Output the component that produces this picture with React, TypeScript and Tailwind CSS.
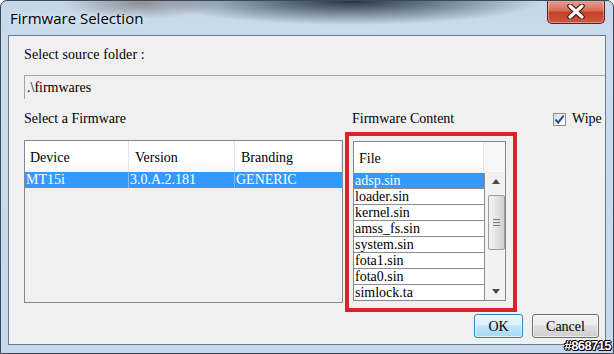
const serif = "font-['Liberation_Serif',serif]";

const files = [
  'adsp.sin',
  'loader.sin',
  'kernel.sin',
  'amss_fs.sin',
  'system.sin',
  'fota1.sin',
  'fota0.sin',
  'simlock.ta',
];

function CloseButton() {
  return (
    <div className="w-[58px] h-[24px] rounded-b-[5px] border border-t-0 border-[#5c2018] bg-[linear-gradient(180deg,#e9a699_0%,#d86b56_45%,#c3402a_55%,#d0573d_100%)] shadow-[inset_0_0_0_1px_rgba(255,255,255,0.35)] flex items-center justify-center">
      <svg width="18" height="15" viewBox="0 0 18 15">
        <path d="M3 2 L15 13 M15 2 L3 13" stroke="#3a1410" strokeWidth="5.5" strokeLinecap="round" />
        <path d="M3 2 L15 13 M15 2 L3 13" stroke="#ffffff" strokeWidth="3.2" strokeLinecap="round" />
      </svg>
    </div>
  );
}

function Checkbox() {
  return (
    <div className="w-[13px] h-[13px] border border-[#8e8f8f] bg-[linear-gradient(135deg,#dcdcdc,#ffffff)] flex items-center justify-center">
      <svg width="11" height="11" viewBox="0 0 11 11">
        <path d="M1.5 5.5 L4.2 8.6 L9.6 1.6" stroke="#2b4e8c" strokeWidth="2" fill="none" />
      </svg>
    </div>
  );
}

function Scrollbar() {
  return (
    <div className="flex-1 bg-[#f2f2f2] flex flex-col items-center">
      <div className="h-[17px] w-full flex items-center justify-center pl-[2px]">
        <svg width="8" height="5" viewBox="0 0 8 5">
          <path d="M0 5 L4 0 L8 5 Z" fill="#4a4a4a" />
        </svg>
      </div>
      <div className="mt-[5px] ml-[2px] w-[17px] h-[55px] rounded-[2px] border border-[#9b9b9b] bg-[linear-gradient(90deg,#f4f4f4,#e4e4e4_50%,#d0d0d0)] flex flex-col items-center justify-center gap-[2px]">
        <div className="w-[7px] h-px bg-[#7a7a7a]" />
        <div className="w-[7px] h-px bg-[#7a7a7a]" />
        <div className="w-[7px] h-px bg-[#7a7a7a]" />
      </div>
      <div className="flex-1" />
      <div className="h-[17px] w-full flex items-center justify-center pl-[2px]">
        <svg width="8" height="5" viewBox="0 0 8 5">
          <path d="M0 0 L8 0 L4 5 Z" fill="#4a4a4a" />
        </svg>
      </div>
    </div>
  );
}

function FirmwareList() {
  return (
    <div className="w-[319px] h-[163px] mt-[13px] border border-[#828790] bg-[#f0f0f0] flex flex-col">
      <div className="h-[31px] bg-[linear-gradient(180deg,#ffffff_60%,#f7f8f9)] flex items-center text-[14px] text-black">
        <div className="w-[104px] h-full pl-[5px] pt-[2px] flex items-center border-r border-[#e3e5e8]">Device</div>
        <div className="w-[106px] h-full pl-[6px] pt-[2px] flex items-center border-r border-[#e3e5e8]">Version</div>
        <div className="flex-1 h-full pl-[6px] pt-[2px] flex items-center border-r border-[#e3e5e8]">Branding</div>
      </div>
      <div className="h-[16px] bg-[#3399ff] text-white text-[14px] leading-[16px] flex">
        <div className="w-[104px] pl-[1px] border-r border-[#7bbcff]">MT15i</div>
        <div className="w-[106px] pl-[1px] border-r border-[#7bbcff]">3.0.A.2.181</div>
        <div className="flex-1 pl-[1px]">GENERIC</div>
      </div>
    </div>
  );
}

function FileList() {
  return (
    <div className="w-[153px] h-[160px] border border-[#828790] bg-white flex flex-col">
      <div className="h-[31px] flex text-[14px] bg-[linear-gradient(180deg,#ffffff_60%,#f7f8f9)] border-b border-[#eceef0]">
        <div className="w-[130px] h-full pl-[5px] pt-[2px] flex items-center border-r border-[#e3e5e8]">File</div>
        <div className="flex-1 bg-[#f7f7f7]" />
      </div>
      <div className="flex-1 flex overflow-hidden">
        <div className="w-[131px] flex flex-col">
          {files.map((f, i) => (
            <div
              key={f}
              className={`h-[16px] shrink-0 pl-[1px] text-[14px] leading-[15px] border-b border-r border-[#8c8c8c] ${i === 0 ? 'bg-[#3399ff] text-white' : 'bg-white text-black'}`}
            >
              {f}
            </div>
          ))}
        </div>
        <Scrollbar />
      </div>
    </div>
  );
}

export default function App() {
  return (
    <div className="w-[614px] h-[354px] relative overflow-hidden rounded-t-[7px] border border-[#3d4957] bg-[radial-gradient(ellipse_190px_24px_at_350px_0px,rgba(28,42,62,0.95),rgba(28,42,62,0)),radial-gradient(ellipse_80px_16px_at_140px_2px,rgba(110,104,100,0.65),rgba(110,104,100,0)),linear-gradient(180deg,#c4d6e8_0%,#cadcee_12%,#c6d9ec_100%)] flex flex-col">
      {/* title bar */}
      <div className="h-[34px] flex items-start justify-between">
        <div className="pl-[9px] pt-[7px] text-[15px] leading-[20px] text-black font-['Open_Sans',sans-serif] [text-shadow:0_0_6px_rgba(255,255,255,0.9)]">
          Firmware Selection
        </div>
        <div className="mr-[8px] -mt-px">
          <CloseButton />
        </div>
      </div>

      {/* client area */}
      <div className={`ml-[7px] w-[598px] h-[310px] border border-[#6a7b8c] bg-[#f0f0f0] text-black ${serif} flex flex-col pl-[15px]`}>
        <div className="mt-[11px] h-[16px] text-[14px] leading-[16px] tracking-[0.1px]">Select source folder :</div>
        <div className="mt-[12px] h-[24px] border-t border-l border-[#a5a5a5] pl-[2px] text-[14px] leading-[23px]">.\firmwares</div>

        <div className="mt-[12px] h-[16px] flex items-center text-[14px] leading-[16px]">
          <div className="w-[328px]">Select a Firmware</div>
          <div className="w-[201px]">Firmware Content</div>
          <Checkbox />
          <div className="ml-[6px]">Wipe</div>
        </div>

        <div className="flex items-start">
          <FirmwareList />
          <div className="ml-[2px] mt-[5px] w-[172px] h-[180px] border-[4px] border-[#dc2128] pl-[4px] pt-[5px]">
            <FileList />
          </div>
        </div>

        <div className="mt-[2px] flex justify-end gap-[9px] pr-[6px] text-[14px]">
          <div className="w-[49px] h-[24px] rounded-[3px] border border-[#3c7fb1] bg-[linear-gradient(180deg,#eaf6fd_0%,#d9f0fc_45%,#bee6fd_50%,#a7d9f5_100%)] shadow-[inset_0_0_0_1px_rgba(255,255,255,0.6)] flex items-center justify-center">
            OK
          </div>
          <div className="w-[67px] h-[24px] rounded-[3px] border border-[#707070] bg-[linear-gradient(180deg,#f2f2f2_0%,#ebebeb_45%,#dddddd_50%,#cfcfcf_100%)] shadow-[inset_0_0_0_1px_rgba(255,255,255,0.6)] flex items-center justify-center">
            Cancel
          </div>
        </div>
      </div>

      {/* watermark */}
      <div className="absolute right-[2px] bottom-0 text-[13px] leading-[14px] tracking-[-0.6px] font-bold text-white font-['Liberation_Sans',sans-serif] [text-shadow:-1px_0_#000,1px_0_#000,0_-1px_#000,0_1px_#000,1px_1px_#000,-1px_-1px_#000]">
        #868715
      </div>
    </div>
  );
}
